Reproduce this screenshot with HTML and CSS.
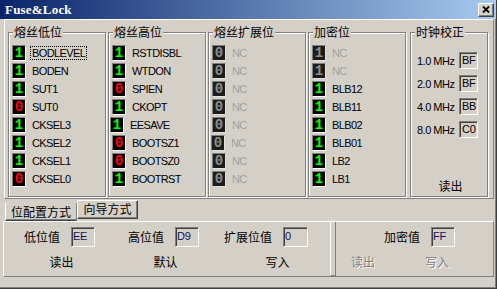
FILE: index.html
```html
<!DOCTYPE html>
<html lang="zh-CN">
<head>
  <meta charset="UTF-8">
  <title>Fuse&amp;Lock</title>
  <link rel="stylesheet" href="styles.css">
</head>
<body>
  <div class="window">
    <div class="titlebar">
      <span class="title">Fuse&amp;Lock</span>
      <span class="close">
        <svg width="8" height="7" viewBox="0 0 8 7"><path d="M1 0.5L7 6.5M7 0.5L1 6.5" stroke="#000" stroke-width="1.8"/></svg>
      </span>
    </div>

    <div class="fuse-panel">
      <fieldset class="group">
        <legend>熔丝低位</legend>
        <div class="bits">
          <div class="bit"><span class="led on">1</span><span class="name focus">BODLEVEL</span></div>
          <div class="bit"><span class="led on">1</span><span class="name">BODEN</span></div>
          <div class="bit"><span class="led on">1</span><span class="name">SUT1</span></div>
          <div class="bit"><span class="led off">0</span><span class="name">SUT0</span></div>
          <div class="bit"><span class="led on">1</span><span class="name">CKSEL3</span></div>
          <div class="bit"><span class="led on">1</span><span class="name">CKSEL2</span></div>
          <div class="bit"><span class="led on">1</span><span class="name">CKSEL1</span></div>
          <div class="bit"><span class="led off">0</span><span class="name">CKSEL0</span></div>
        </div>
      </fieldset>

      <fieldset class="group">
        <legend>熔丝高位</legend>
        <div class="bits">
          <div class="bit"><span class="led on">1</span><span class="name">RSTDISBL</span></div>
          <div class="bit"><span class="led on">1</span><span class="name">WTDON</span></div>
          <div class="bit"><span class="led off">0</span><span class="name">SPIEN</span></div>
          <div class="bit"><span class="led on">1</span><span class="name">CKOPT</span></div>
          <div class="bit nudge2"><span class="led on">1</span><span class="name">EESAVE</span></div>
          <div class="bit"><span class="led off">0</span><span class="name">BOOTSZ1</span></div>
          <div class="bit"><span class="led off">0</span><span class="name">BOOTSZ0</span></div>
          <div class="bit"><span class="led on">1</span><span class="name">BOOTRST</span></div>
        </div>
      </fieldset>

      <fieldset class="group">
        <legend>熔丝扩展位</legend>
        <div class="bits">
          <div class="bit"><span class="led dim">0</span><span class="name nc">NC</span></div>
          <div class="bit"><span class="led dim">0</span><span class="name nc">NC</span></div>
          <div class="bit"><span class="led dim">0</span><span class="name nc">NC</span></div>
          <div class="bit"><span class="led dim">0</span><span class="name nc">NC</span></div>
          <div class="bit"><span class="led dim">0</span><span class="name nc">NC</span></div>
          <div class="bit nudge1"><span class="led dim">0</span><span class="name nc">NC</span></div>
          <div class="bit"><span class="led dim">0</span><span class="name nc">NC</span></div>
          <div class="bit"><span class="led dim">0</span><span class="name nc">NC</span></div>
        </div>
      </fieldset>

      <fieldset class="group">
        <legend>加密位</legend>
        <div class="bits">
          <div class="bit"><span class="led dim">1</span><span class="name nc">NC</span></div>
          <div class="bit"><span class="led dim">1</span><span class="name nc">NC</span></div>
          <div class="bit"><span class="led on">1</span><span class="name">BLB12</span></div>
          <div class="bit"><span class="led on">1</span><span class="name">BLB11</span></div>
          <div class="bit"><span class="led on">1</span><span class="name">BLB02</span></div>
          <div class="bit"><span class="led on">1</span><span class="name">BLB01</span></div>
          <div class="bit"><span class="led on">1</span><span class="name">LB2</span></div>
          <div class="bit"><span class="led on">1</span><span class="name">LB1</span></div>
        </div>
      </fieldset>

      <fieldset class="group clock">
        <legend>时钟校正</legend>
        <div class="clock-rows">
          <div class="clock-row"><span class="freq">1.0 MHz</span><span class="edit">BF</span></div>
          <div class="clock-row"><span class="freq">2.0 MHz</span><span class="edit">BF</span></div>
          <div class="clock-row"><span class="freq">4.0 MHz</span><span class="edit">BB</span></div>
          <div class="clock-row"><span class="freq">8.0 MHz</span><span class="edit">C0</span></div>
        </div>
        <div class="clock-read">读出</div>
      </fieldset>
    </div>

    <div class="tabs">
      <span class="tab">位配置方式</span>
      <span class="tab raised">向导方式</span>
    </div>

    <div class="lower">
      <div class="pane bits-pane">
        <div class="field-grid">
          <div class="field"><span>低位值</span><span class="edit val">EE</span></div>
          <div class="field"><span>高位值</span><span class="edit val">D9</span></div>
          <div class="field"><span>扩展位值</span><span class="edit val wide">0</span></div>
          <span class="btn">读出</span>
          <span class="btn">默认</span>
          <span class="btn push">写入</span>
        </div>
      </div>
      <div class="splitter"></div>
      <div class="pane lock-pane">
        <div class="field lock-field"><span>加密值</span><span class="edit val">FF</span></div>
        <div class="btn-row">
          <span class="btn small disabled">读出</span>
          <span class="btn small disabled">写入</span>
        </div>
      </div>
    </div>
  </div>
</body>
</html>
```

FILE: styles.css
```css
* { box-sizing: border-box; }

body {
  margin: 0;
  background: #d4d0c8;
  font-family: "Liberation Sans", Arial, sans-serif;
  font-size: 11px;
  color: #000;
}

.window {
  width: 497px;
  height: 289px;
  border-right: 1px solid #404040;
  border-bottom: 1px solid #404040;
  box-shadow: inset -1px -1px 0 #808080;
  overflow: hidden;
}

/* title bar */
.titlebar {
  height: 19px;
  display: flex;
  align-items: center;
  justify-content: space-between;
  padding: 0 2px 0 5px;
  background: linear-gradient(to right, #0a246a, #a6caf0);
}

.title {
  font: bold 13px/13px "Liberation Serif", serif;
  color: #fff;
  letter-spacing: 0.2px;
}

.close {
  width: 16px;
  height: 14px;
  display: flex;
  align-items: center;
  justify-content: center;
  background: #d4d0c8;
  border: 1px solid;
  border-color: #fff #404040 #404040 #fff;
  box-shadow: inset -1px -1px 0 #808080;
}

/* fuse groups */
.fuse-panel {
  margin-left: 4px;
  width: 490px;
  height: 180px;
  border: 1px solid;
  border-color: #fff #808080 #808080 #fff;
  padding: 6px 0 0 3px;
  display: flex;
  gap: 2px;
}

.group {
  margin: 0;
  padding: 0 0 0 3px;
  width: 98px;
  height: 171px;
  min-width: 0;
  border: 1px solid #808080;
  box-shadow: 1px 1px 0 #fff, inset 1px 1px 0 #fff;
}

.group legend {
  font: 12px/12px "Noto Sans CJK SC", sans-serif;
  margin-left: 1px;
  padding: 0 1px;
  background: #d4d0c8;
}

.bits {
  padding-top: 7px;
  display: flex;
  flex-direction: column;
  gap: 2px;
}

.bit {
  display: flex;
  align-items: center;
  height: 16px;
}

.nudge2 { margin-left: -2px; }
.nudge1 { margin-left: -1px; }

.led {
  width: 14px;
  height: 16px;
  background: #000;
  border: 1px solid;
  border-color: #808080 #fff #fff #808080;
  font: bold 14px/14px "Liberation Mono", monospace;
  text-align: center;
}

.led.on { color: #00ff00; }
.led.off { color: #ff0000; }
.led.dim {
  background: #1c1c1c;
  color: #8c8c8c;
  border-color: #808080 #e0e0e0 #e0e0e0 #808080;
}

.name {
  margin-left: 4px;
  padding: 0 1px;
  line-height: 12px;
  border: 1px dotted transparent;
  letter-spacing: -0.6px;
}

.name.focus { border-color: #000; }
.name.nc { color: #a0a0a0; }

/* clock calibration */
.group.clock {
  width: 78px;
  margin-left: 2px;
}

.clock-rows {
  padding: 14px 0 0 3px;
  display: flex;
  flex-direction: column;
  gap: 6px;
}

.clock-row {
  display: flex;
  align-items: center;
  height: 17px;
}

.freq {
  width: 42px;
  letter-spacing: -0.5px;
}

.edit {
  width: 19px;
  height: 17px;
  border: 1px solid;
  border-color: #808080 #fff #fff #808080;
  box-shadow: inset 1px 1px 0 #404040;
  padding: 1px 0 0 2px;
  line-height: 13px;
  letter-spacing: -0.3px;
}

.clock-read {
  margin-top: 42px;
  text-align: center;
  font: 12px/12px "Noto Sans CJK SC", sans-serif;
}

/* tabs */
.tabs {
  height: 22px;
  padding-left: 5px;
  display: flex;
  align-items: flex-start;
  font: 12px/12px "Noto Sans CJK SC", sans-serif;
}

.tab {
  width: 72px;
  height: 18px;
  margin-top: 4px;
  padding-top: 3px;
  text-align: center;
  border-left: 1px solid #fff;
  border-right: 1px solid #808080;
  border-bottom: 1px solid #404040;
  box-shadow: inset 0 -1px 0 #808080;
}

.tab.raised {
  width: 61px;
  height: 19px;
  margin-top: 1px;
  padding-top: 2px;
  border-top: 1px solid #fff;
  border-right-color: #404040;
  box-shadow: inset -1px -1px 0 #808080;
}

/* lower panel */
.lower {
  margin-left: 3px;
  width: 491px;
  height: 56px;
  border: 1px solid;
  border-color: #fff #808080 #808080 #fff;
  display: flex;
  font: 12px/12px "Noto Sans CJK SC", sans-serif;
}

.pane { padding-top: 5px; }

.bits-pane {
  width: 326px;
  padding-left: 20px;
}

.field-grid {
  display: grid;
  grid-template-columns: 104px 96px 1fr;
  row-gap: 7px;
}

.field {
  display: flex;
  align-items: center;
  gap: 11px;
  height: 20px;
}

.edit.val {
  width: 24px;
  height: 20px;
  padding: 2px 0 0 1px;
  font: 11px/13px "Liberation Sans", Arial, sans-serif;
  color: #10105a;
}

.edit.val.wide { width: 25px; }

.btn {
  width: 75px;
  height: 16px;
  line-height: 16px;
  text-align: center;
}

.btn.push { margin-left: 16px; }

.btn.small { width: 50px; }

.btn.disabled {
  color: #808080;
  text-shadow: 1px 1px 0 #fff;
}

.splitter {
  width: 6px;
  border-left: 1px solid #fff;
  border-right: 1px solid #808080;
  border-bottom: 1px solid #808080;
}

.lock-pane { flex: 1; }

.lock-field { padding-left: 48px; }

.btn-row {
  margin-top: 7px;
  padding-left: 2px;
  display: flex;
  gap: 24px;
}
```
